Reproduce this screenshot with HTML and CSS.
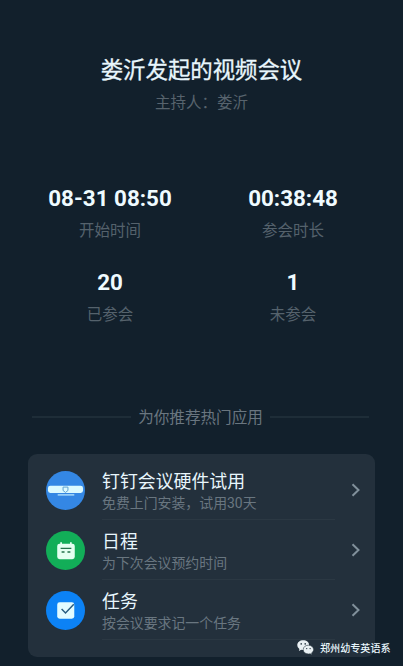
FILE: index.html
```html
<!DOCTYPE html>
<html lang="zh-CN">
<head>
<meta charset="utf-8">
<title>视频会议</title>
<link rel="stylesheet" href="styles.css">
</head>
<body>
<main class="page">
  <header class="head">
    <h1 class="title">娄沂发起的视频会议</h1>
    <p class="host">主持人：娄沂</p>
  </header>
  <section class="stats">
    <div class="stat"><strong class="value">08-31 08:50</strong><span class="label">开始时间</span></div>
    <div class="stat"><strong class="value">00:38:48</strong><span class="label">参会时长</span></div>
    <div class="stat"><strong class="value">20</strong><span class="label">已参会</span></div>
    <div class="stat"><strong class="value">1</strong><span class="label">未参会</span></div>
  </section>
  <div class="divider"><span class="divider-text">为你推荐热门应用</span></div>
  <section class="card">
    <div class="item">
      <svg class="icon" viewBox="0 0 40 40"><circle cx="20" cy="20" r="20" fill="#3487e4"/><rect x="2" y="15" width="36" height="7.5" rx="2.5" fill="#dcfaff"/><path d="M12 24.5h17" stroke="#a9dcfb" stroke-width="1.5"/><path d="M17.5 16.5h5v3.500l-2.500 2-2.500-2z" fill="none" stroke="#5c9fd0" stroke-width="1"/></svg>
      <div class="info"><h2 class="name">钉钉会议硬件试用</h2><p class="desc">免费上门安装，试用30天</p></div>
      <svg class="arrow" viewBox="0 0 10 14"><path d="M1.500 1.200 7.500 7l-6 5.800"/></svg>
    </div>
    <div class="item">
      <svg class="icon" viewBox="0 0 40 40"><circle cx="20" cy="20" r="20" fill="#12ae58"/><rect x="11.5" y="13" width="18" height="16" rx="2.5" fill="#e4fff1"/><path d="M15.500 11.500v4M25.500 11.500v4" stroke="#e4fff1" stroke-width="1.8"/><path d="M15 17.800h11M16 21.500h3M22 21.500h3" stroke="#24724b" stroke-width="1.4"/></svg>
      <div class="info"><h2 class="name">日程</h2><p class="desc">为下次会议预约时间</p></div>
      <svg class="arrow" viewBox="0 0 10 14"><path d="M1.500 1.200 7.500 7l-6 5.800"/></svg>
    </div>
    <div class="item">
      <svg class="icon" viewBox="0 0 40 40"><circle cx="20" cy="20" r="20" fill="#0c82f5"/><rect x="11.5" y="11.5" width="17.5" height="17" rx="2.5" fill="#e2fbff"/><path d="m16 18.500 4 4 8.500-9" fill="none" stroke="#285c80" stroke-width="1.5"/></svg>
      <div class="info"><h2 class="name">任务</h2><p class="desc">按会议要求记一个任务</p></div>
      <svg class="arrow" viewBox="0 0 10 14"><path d="M1.500 1.200 7.500 7l-6 5.800"/></svg>
    </div>
  </section>
  <div class="watermark">
    <svg class="wechat" viewBox="0 0 17 15"><path d="M6.200.3C2.800.3.3 2.400.3 5.100c0 1.600.8 2.900 2.100 3.800L1.900 11l2.300-1.200c.7.2 1.300.3 2 .3 3.300 0 5.900-2.200 5.900-5S9.500.3 6.200.3z" fill="#e9f0f3"/><path d="M11.400 5.200c-2.900 0-5.200 1.900-5.200 4.400S8.500 14 11.400 14c.6 0 1.200-.1 1.700-.3l2 1-.5-1.800c1.200-.8 2-2 2-3.300 0-2.500-2.300-4.400-5.200-4.400z" fill="#e9f0f3" stroke="#263540" stroke-width=".6"/><g fill="#263540"><circle cx="4.200" cy="3.900" r=".8"/><circle cx="8.200" cy="3.900" r=".8"/><circle cx="9.700" cy="8.600" r=".7"/><circle cx="13.100" cy="8.600" r=".7"/></g></svg>
    <span>郑州幼专英语系</span>
  </div>
</main>
</body>
</html>
```
FILE: styles.css
```css
* { box-sizing: border-box; margin: 0; padding: 0; }
body {
  background: #12202c;
  font-family: Roboto, "Noto Sans CJK SC", sans-serif;
  color: #e8f6fc;
}
.page { position: relative; width: 403px; height: 666px; overflow: hidden; padding-top: 54px; }
.head { text-align: center; }
.title { font-size: 22.4px; line-height: 32px; font-weight: 400; -webkit-text-stroke: 0.3px currentColor; }
.host { margin-top: 6px; font-size: 15.5px; line-height: 22px; color: #57636d; }
.stats {
  display: grid;
  grid-template-columns: 183px 183px;
  justify-content: center;
  row-gap: 27px;
  margin-top: 70px;
}
.stat { display: flex; flex-direction: column; align-items: center; }
.value { font-size: 22.4px; line-height: 28px; font-weight: 700; color: #effbff; }
.label { margin-top: 9px; font-size: 15.5px; line-height: 20px; color: #55626c; }
.divider { display: flex; align-items: center; gap: 7px; margin: 80px 34px 0 32px; height: 24px; }
.divider::before, .divider::after { content: ""; flex: 1; height: 2px; background: #1e2d38; }
.divider-text { position: relative; top: 1px; font-size: 15.6px; line-height: 24px; color: #6a7680; }
.card {
  margin: 25px 28px 0;
  height: 203px;
  padding: 6px 14px 0 18px;
  border-radius: 9px;
  background: #23303c;
}
.item { display: flex; align-items: center; height: 60px; }
.icon { width: 39px; height: 39px; flex: none; }
.info { position: relative; flex: 1; height: 60px; margin-left: 17px; padding-top: 10px; }
.info::after { content: ""; position: absolute; left: 0; right: 16px; bottom: 0; height: 1px; background: #2b3843; }
.name { font-size: 17.9px; line-height: 24px; font-weight: 400; }
.desc { margin-top: -1px; font-size: 13.9px; line-height: 20px; color: #697680; }
.arrow { width: 10px; height: 14px; flex: none; fill: none; stroke: #81909b; stroke-width: 2; }
.watermark {
  position: absolute;
  left: 297px;
  top: 638px;
  display: flex;
  align-items: center;
  gap: 6px;
  height: 18px;
  font-size: 10.1px;
  font-weight: 500;
  white-space: nowrap;
}
.wechat { width: 17px; height: 15px; }
```
